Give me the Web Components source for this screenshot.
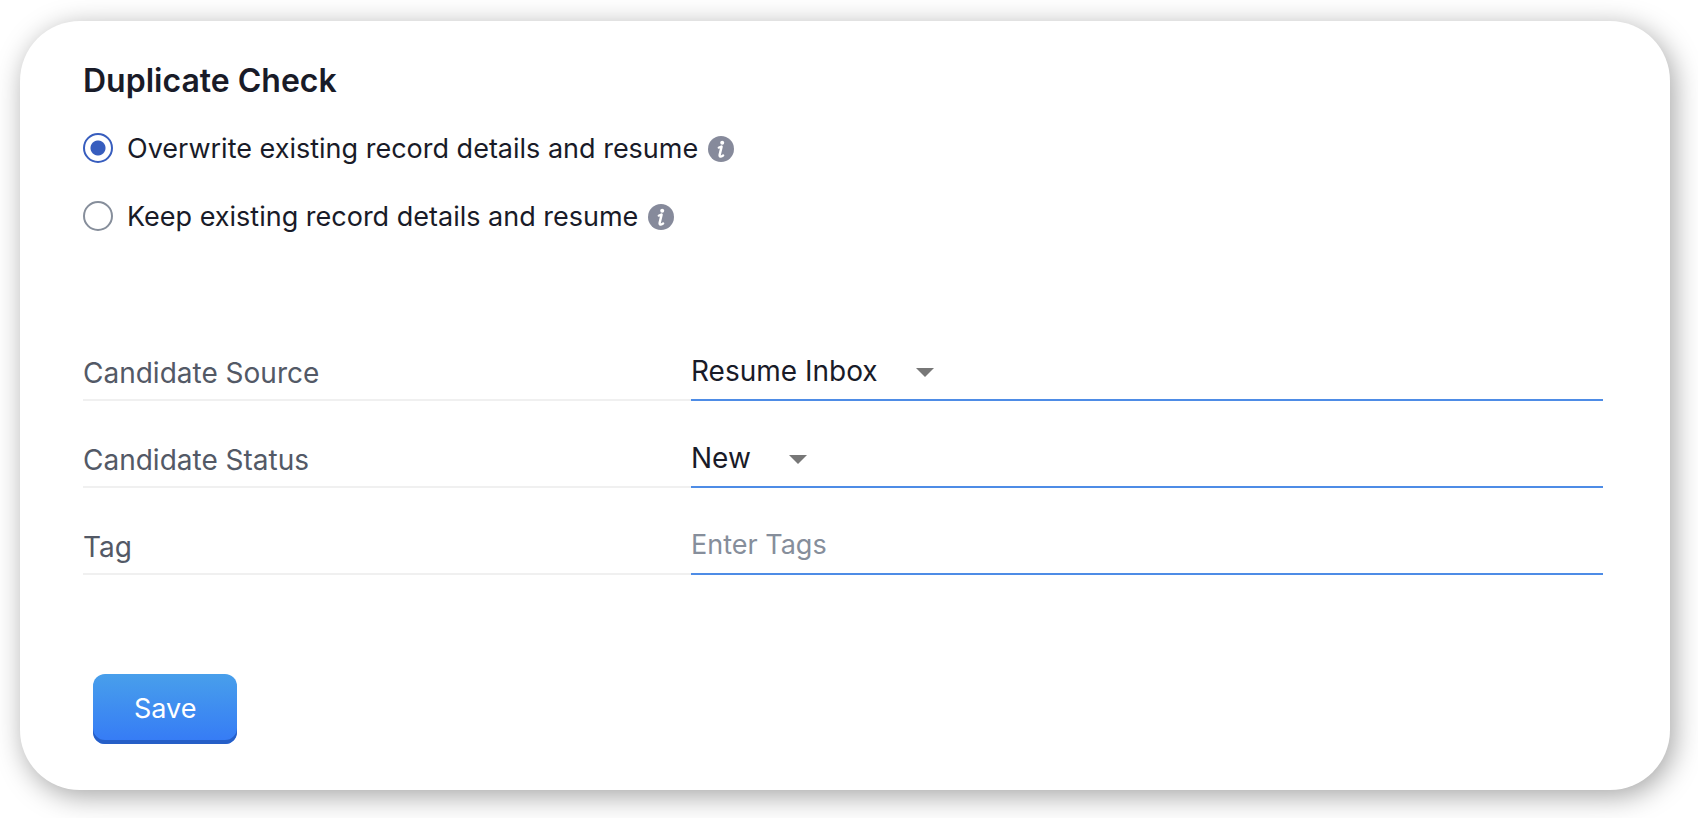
<!DOCTYPE html>
<html lang="en">
<head>
<meta charset="utf-8">
<meta name="viewport" content="width=device-width, initial-scale=1">
<title>Duplicate Check</title>
<style>
  body {
    margin: 0;
    padding: 21px 28px 28px 20px;
    background: #fff;
    color: #191b28;
    font: 27px/34px Inter, "Noto Sans", sans-serif;
  }
</style>
</head>
<body>
<settings-card heading="Duplicate Check">
  <radio-options slot="choices"></radio-options>
  <field-row label="Candidate Source" kind="select" value="Resume Inbox"></field-row>
  <field-row label="Candidate Status" kind="select" value="New"></field-row>
  <field-row label="Tag" kind="text" placeholder="Enter Tags"></field-row>
  <save-button slot="actions">Save</save-button>
</settings-card>

<script>
  class SettingsCard extends HTMLElement {
    constructor() {
      super();
      this.attachShadow({ mode: 'open' }).innerHTML = `
        <style>
          :host { display: block; }
          section {
            box-sizing: border-box;
            padding: 40px 67px 46px 63px;
            border-radius: 60px;
            background: #fff;
            box-shadow: 4px 6px 28px rgba(0, 0, 0, .36);
          }
          h2 { margin: 0; font-size: 32px; line-height: 40px; font-weight: 600; }
          .choices { margin-top: 31px; }
          .fields { margin-top: 80px; }
          .actions { display: flex; margin: 99px 10px 0; }
        </style>
        <section>
          <h2></h2>
          <div class="choices"><slot name="choices"></slot></div>
          <div class="fields"><slot></slot></div>
          <div class="actions"><slot name="actions"></slot></div>
        </section>`;
    }
    connectedCallback() {
      this.shadowRoot.querySelector('h2').textContent = this.getAttribute('heading');
    }
  }

  class InfoIcon extends HTMLElement {
    constructor() {
      super();
      this.attachShadow({ mode: 'open' }).innerHTML = `
        <style>
          :host { display: block; width: 26px; height: 26px; }
          svg { display: block; }
        </style>
        <svg width="26" height="26" viewBox="0 0 26 26" aria-hidden="true">
          <circle cx="13" cy="13" r="13" fill="#868a9b"/>
          <circle cx="14.2" cy="6.8" r="2" fill="#fff"/>
          <path d="M10.8 11.6c1.1-.1 2-.5 2.8-1l-1.9 8c-.5 2.4.9 2.5 3.4.9" fill="none" stroke="#fff" stroke-width="2.4" stroke-linecap="round" stroke-linejoin="round"/>
        </svg>`;
    }
  }

  class RadioOptions extends HTMLElement {
    constructor() {
      super();
      this.attachShadow({ mode: 'open' }).innerHTML = `
        <style>
          :host { display: block; }
          .list { display: grid; gap: 34px; }
          .option { display: flex; align-items: center; }
          input {
            appearance: none;
            box-sizing: border-box;
            width: 30px;
            height: 30px;
            margin: 0 14px 2px 0;
            border: 2px solid #868e9b;
            border-radius: 50%;
            background: #fff;
          }
          input:checked {
            border-color: #375dbe;
            background: radial-gradient(circle, #375dbe 7px, #fff 8px);
          }
          info-icon { margin-left: 10px; }
        </style>
        <div class="list" role="radiogroup" aria-label="Duplicate Check">
          <div class="option">
            <input type="radio" name="mode" id="overwrite" checked>
            <label for="overwrite">Overwrite existing record details and resume</label>
            <info-icon></info-icon>
          </div>
          <div class="option">
            <input type="radio" name="mode" id="keep">
            <label for="keep">Keep existing record details and resume</label>
            <info-icon></info-icon>
          </div>
        </div>`;
    }
  }

  class FieldRow extends HTMLElement {
    constructor() {
      super();
      this.attachShadow({ mode: 'open' }).innerHTML = `
        <style>
          :host { display: block; }
          .row { display: grid; grid-template-columns: 2fr 3fr; height: 87px; }
          label, .control { display: flex; box-sizing: border-box; border-bottom: 2px solid #f0f0f0; }
          label { align-items: flex-end; padding-bottom: 9px; color: #535966; font-size: 28px; }
          .control { align-items: flex-end; padding-bottom: 11px; border-color: #4e8ce6; }
          select, input {
            appearance: none;
            height: 34px;
            margin: 0;
            padding: 0;
            border: 0;
            outline: 0;
            background: none;
            color: inherit;
            font: inherit;
          }
          select { font-size: 28px; }
          input { width: 100%; }
          input::placeholder { color: #868e9b; opacity: 1; }
          svg { margin: 0 0 11px 38px; }
        </style>
        <div class="row">
          <label for="field"></label>
          <div class="control"></div>
        </div>`;
    }
    connectedCallback() {
      const root = this.shadowRoot;
      const control = root.querySelector('.control');
      root.querySelector('label').textContent = this.getAttribute('label');
      if (this.getAttribute('kind') === 'select') {
        control.innerHTML = `
          <select id="field"><option></option></select>
          <svg width="18" height="9" viewBox="0 0 18 9" aria-hidden="true"><path d="M0 0h18L9 9z" fill="#777"/></svg>`;
        control.querySelector('option').textContent = this.getAttribute('value');
      } else {
        control.innerHTML = '<input id="field" type="text">';
        control.firstChild.placeholder = this.getAttribute('placeholder');
      }
    }
  }

  class SaveButton extends HTMLElement {
    constructor() {
      super();
      this.attachShadow({ mode: 'open' }).innerHTML = `
        <style>
          :host { display: block; }
          button {
            display: block;
            height: 70px;
            margin: 0;
            padding: 0 41px;
            border: 0;
            border-radius: 12px;
            background: linear-gradient(#489feb, #357af6);
            box-shadow: inset 0 -4px #265fc7;
            color: #fff;
            font: inherit;
          }
        </style>
        <button type="button"><slot></slot></button>`;
    }
  }

  customElements.define('info-icon', InfoIcon);
  customElements.define('radio-options', RadioOptions);
  customElements.define('field-row', FieldRow);
  customElements.define('save-button', SaveButton);
  customElements.define('settings-card', SettingsCard);
</script>
</body>
</html>
